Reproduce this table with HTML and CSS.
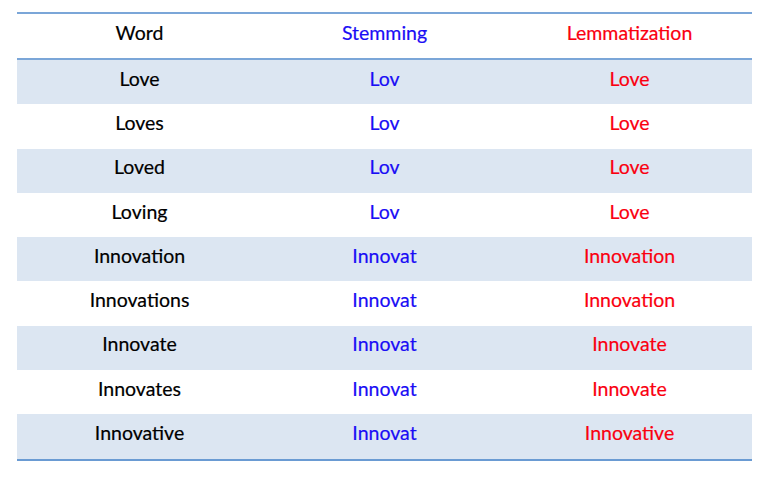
FILE: index.html
```html
<!DOCTYPE html>
<html>
<head>
<meta charset="utf-8">
<link rel="stylesheet" href="styles.css">
</head>
<body>
<table class="tbl">
  <thead>
    <tr><th class="c-word">Word</th><th class="c-stem">Stemming</th><th class="c-lem">Lemmatization</th></tr>
  </thead>
  <tbody>
    <tr><td class="c-word">Love</td><td class="c-stem">Lov</td><td class="c-lem">Love</td></tr>
    <tr><td class="c-word">Loves</td><td class="c-stem">Lov</td><td class="c-lem">Love</td></tr>
    <tr><td class="c-word">Loved</td><td class="c-stem">Lov</td><td class="c-lem">Love</td></tr>
    <tr><td class="c-word">Loving</td><td class="c-stem">Lov</td><td class="c-lem">Love</td></tr>
    <tr><td class="c-word">Innovation</td><td class="c-stem">Innovat</td><td class="c-lem">Innovation</td></tr>
    <tr><td class="c-word">Innovations</td><td class="c-stem">Innovat</td><td class="c-lem">Innovation</td></tr>
    <tr><td class="c-word">Innovate</td><td class="c-stem">Innovat</td><td class="c-lem">Innovate</td></tr>
    <tr><td class="c-word">Innovates</td><td class="c-stem">Innovat</td><td class="c-lem">Innovate</td></tr>
    <tr><td class="c-word">Innovative</td><td class="c-stem">Innovat</td><td class="c-lem">Innovative</td></tr>
  </tbody>
</table>
</body>
</html>
```
FILE: styles.css
```css
html, body {
  margin: 0;
  padding: 0;
  background: #ffffff;
}
body {
  padding: 12px 0 0 17px;
  font-family: "Lato", "Open Sans", sans-serif;
}
.tbl {
  width: 735px;
  border-collapse: collapse;
  table-layout: fixed;
  border-top: 2px solid #7ba6d8;
  border-bottom: 2px solid #6a9bd3;
}
.tbl th, .tbl td {
  text-align: center;
  font-size: 19.5px;
  font-weight: 400;
  padding: 0 0 7px 0;
  height: 37.3px;
  line-height: 20px;
  -webkit-text-stroke: 0.2px currentColor;
}
.tbl thead th {
  height: 38px;
  padding-bottom: 6px;
  border-bottom: 2px solid #7ba6d8;
}
.tbl tbody tr:nth-child(odd) td {
  background: #dce6f2;
}
.c-word { color: #000000; }
.c-stem { color: #1a0df5; }
.c-lem { color: #fa0010; }
```
